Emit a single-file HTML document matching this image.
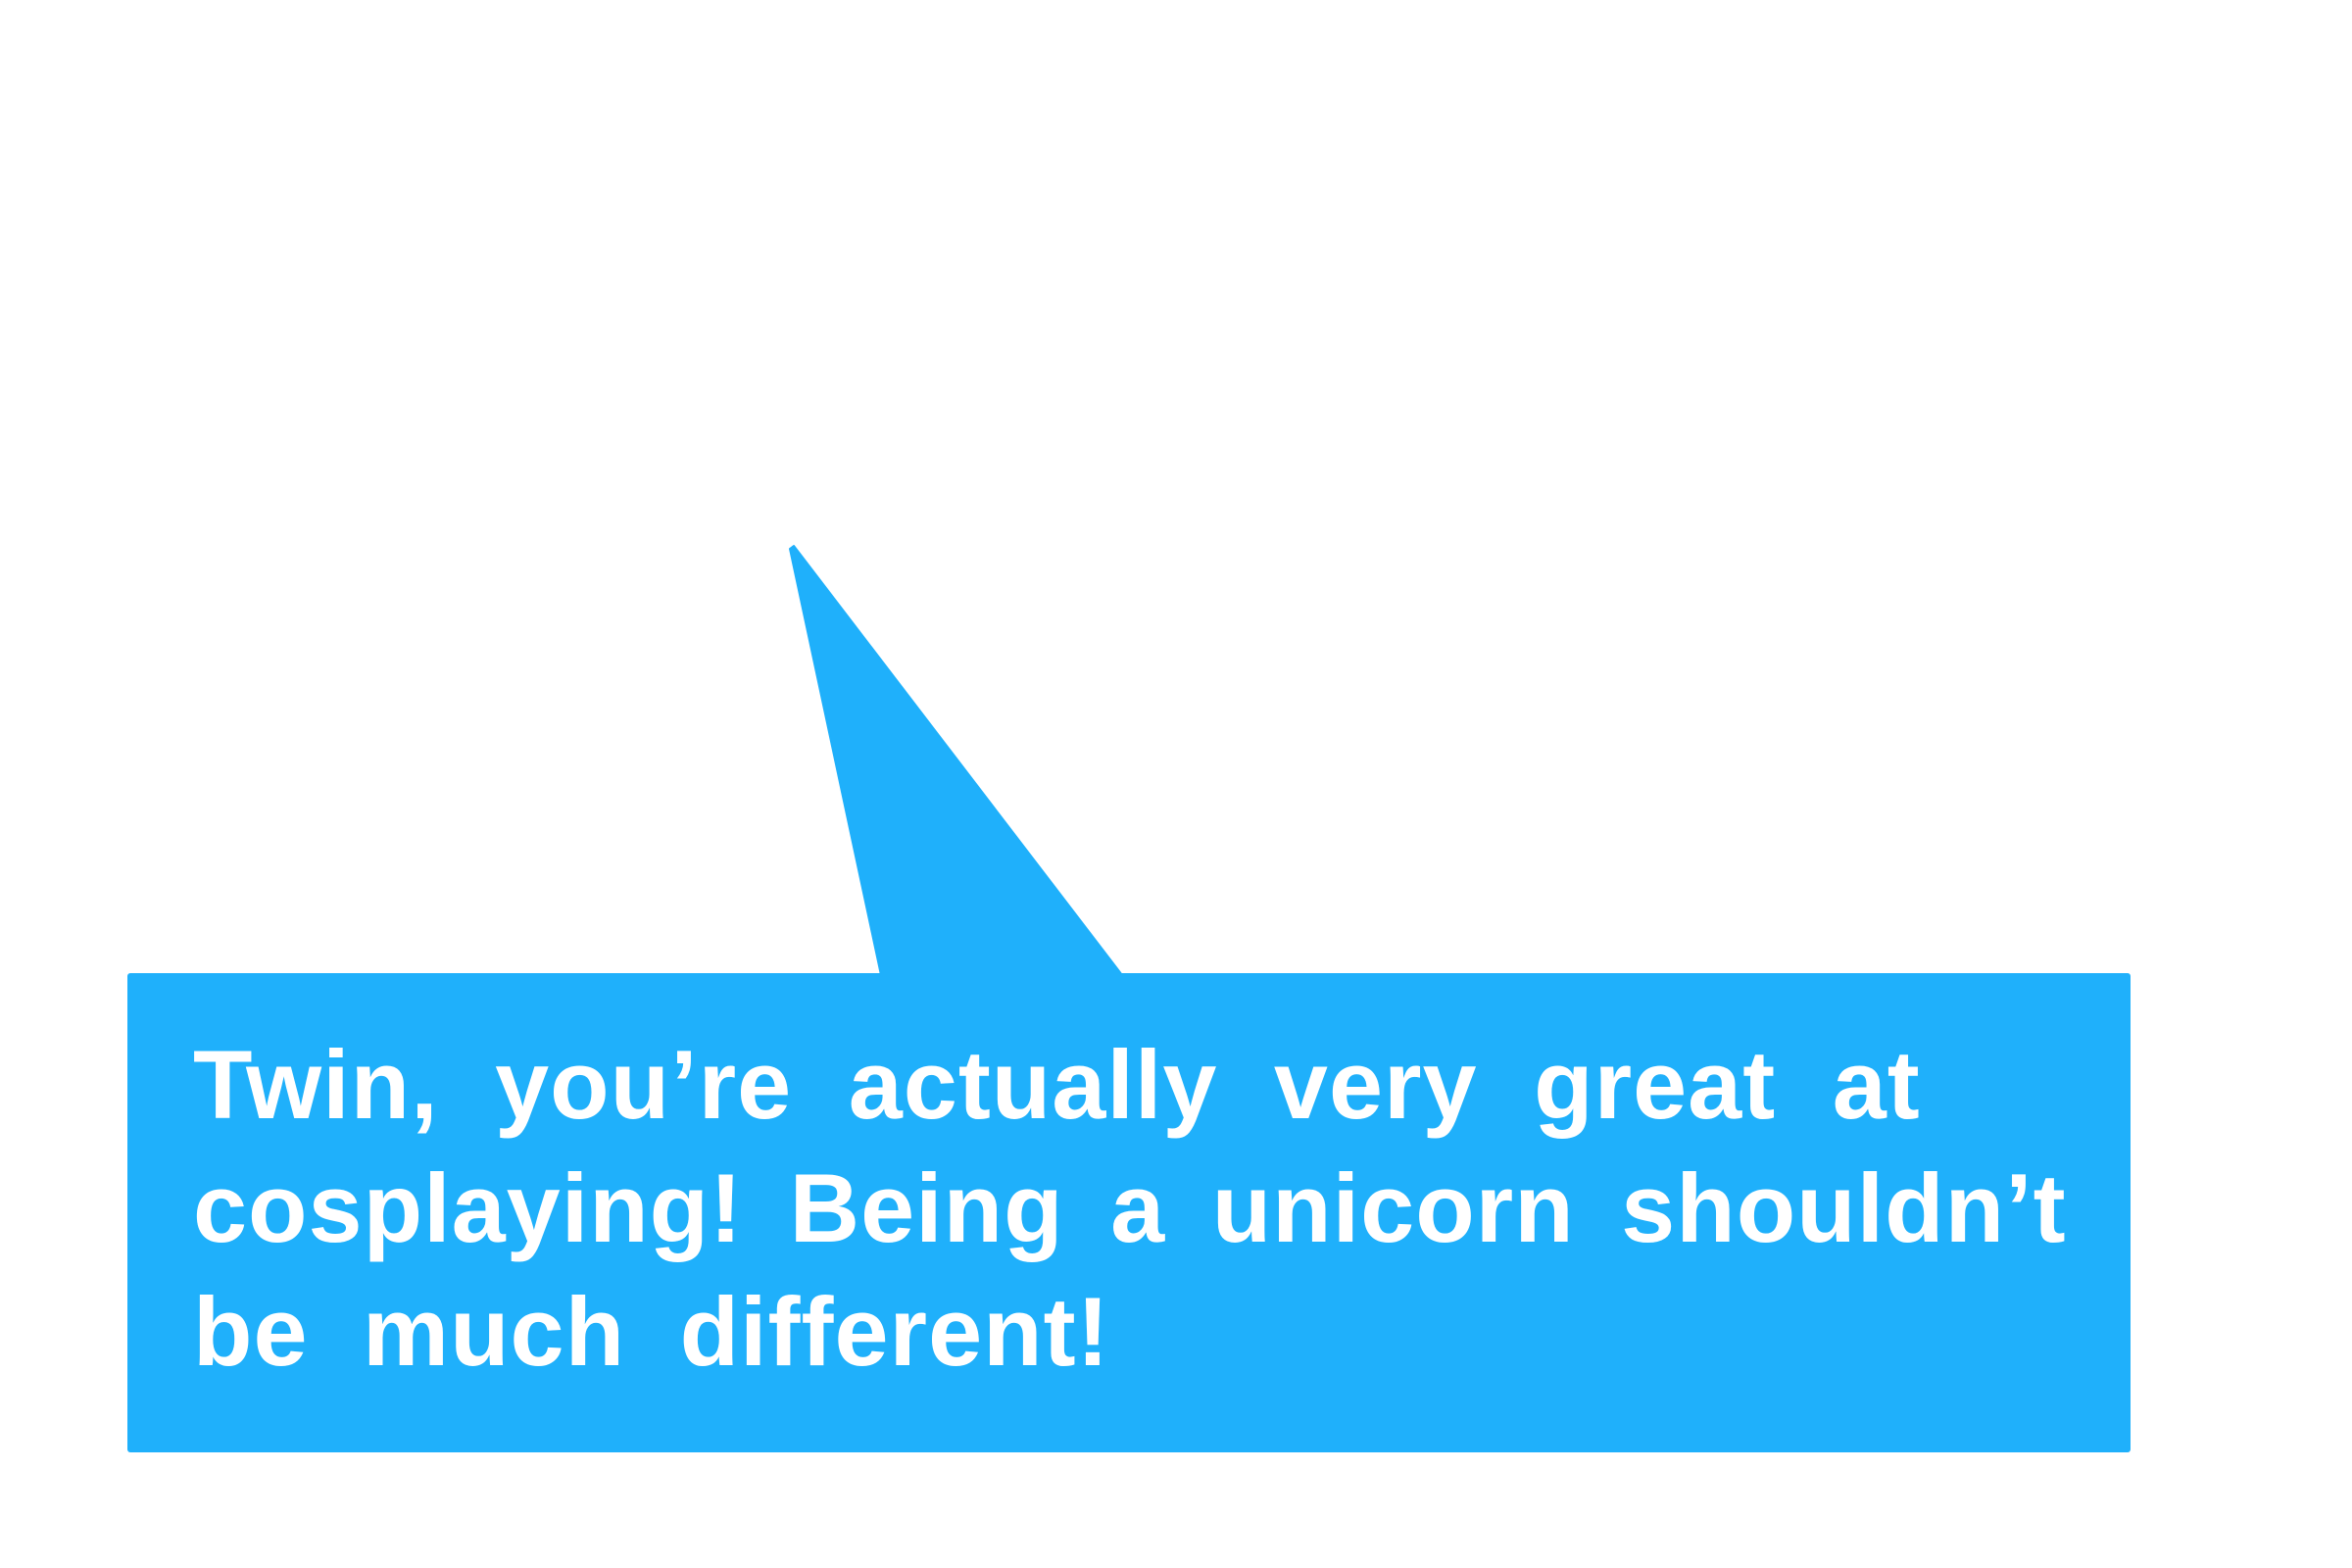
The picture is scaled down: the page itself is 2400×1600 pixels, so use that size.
<!DOCTYPE html>
<html><head><meta charset="utf-8"><style>
html,body{margin:0;padding:0;background:#fff;width:2400px;height:1600px;overflow:hidden;position:relative}
svg{position:absolute;left:0;top:0}
.t{position:absolute;left:197px;top:1044px;font-family:"Liberation Sans",sans-serif;font-weight:bold;font-size:99px;line-height:126px;color:#fff;white-space:nowrap;letter-spacing:1px}
.t div{height:126px}
</style></head><body>
<svg width="2400" height="1600" viewBox="0 0 2400 1600">
<rect x="130" y="993" width="2044" height="489" rx="3" fill="#1FB0FB"/>
<polygon points="899,995 806,560 810,557 1145,995" fill="#1FB0FB" stroke="#1FB0FB" stroke-width="2" stroke-linejoin="round"/>
</svg>
<div class="t"><div style="word-spacing:29px">Twin, you’re actually very great at</div><div style="word-spacing:19px">cosplaying! Being a unicorn shouldn’t</div><div style="word-spacing:27px">be much different!</div></div>
</body></html>
